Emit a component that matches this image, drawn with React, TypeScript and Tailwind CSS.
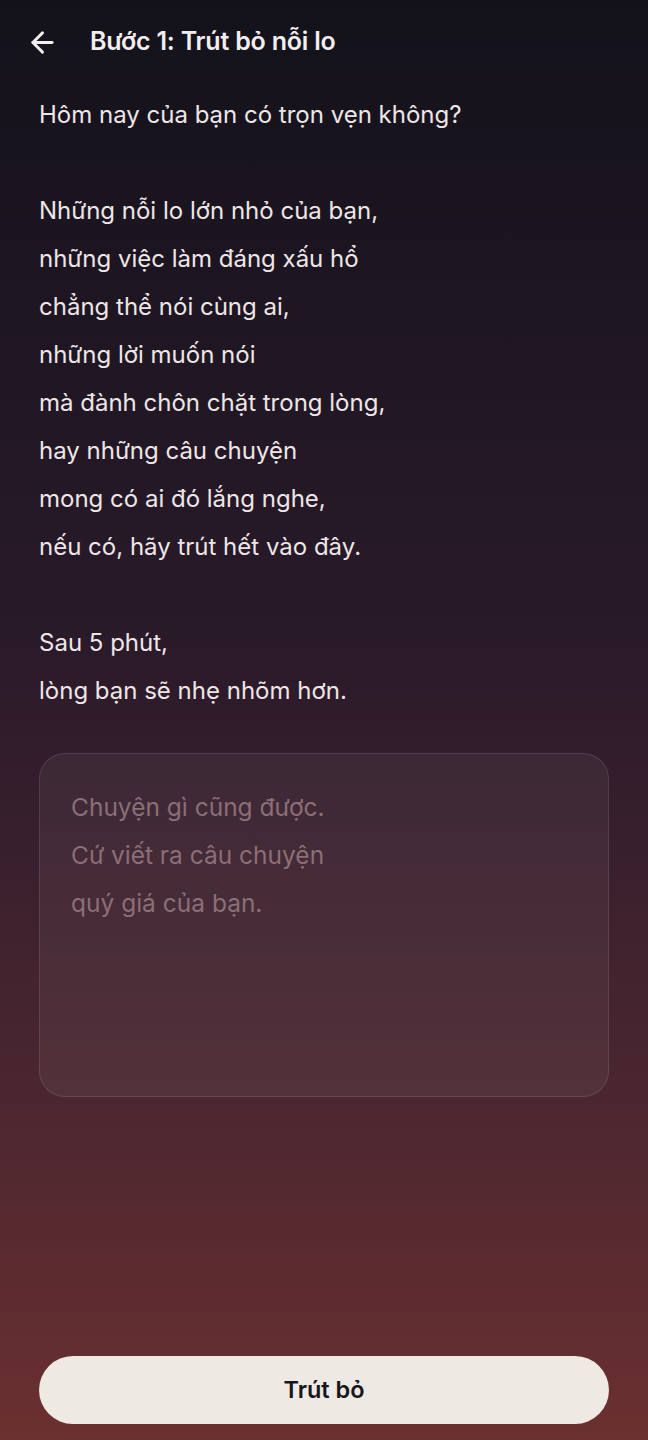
import { ArrowLeft } from "lucide-react";

const intro = [
  "Hôm nay của bạn có trọn vẹn không?",
  "",
  "Những nỗi lo lớn nhỏ của bạn,",
  "những việc làm đáng xấu hổ",
  "chẳng thể nói cùng ai,",
  "những lời muốn nói",
  "mà đành chôn chặt trong lòng,",
  "hay những câu chuyện",
  "mong có ai đó lắng nghe,",
  "nếu có, hãy trút hết vào đây.",
  "",
  "Sau 5 phút,",
  "lòng bạn sẽ nhẹ nhõm hơn.",
];

export default function App() {
  return (
    <div
      className="flex min-h-[1440px] w-full flex-col bg-[linear-gradient(180deg,#13121b_0%,#2a1a2a_45%,#4a2630_75%,#6b3030_100%)] text-[#eee6e6]"
      style={{ fontFamily: "Inter, 'Noto Sans', sans-serif" }}
    >
      {/* header */}
      <header className="flex h-[84px] items-center">
        <button className="ml-[25px] flex h-[34px] w-[34px] items-center justify-center text-[#f3eeee]">
          <ArrowLeft size={33} strokeWidth={2.1} />
        </button>
        <h1 className="ml-[31px] text-[25px] font-semibold tracking-[-0.2px] text-[#f3eeee]">
          Bước 1: Trút bỏ nỗi lo
        </h1>
      </header>

      <main className="flex flex-1 flex-col px-[39px] pt-[7px]">
        <div className="text-[24px] leading-[48px]">
          {intro.map((line, i) => (
            <p key={i} className="h-[48px]">
              {line}
            </p>
          ))}
        </div>

        <textarea
          className="mt-[38px] h-[344px] w-full resize-none rounded-[26px] border border-white/10 bg-white/[0.05] px-[31px] pt-[29px] text-[24.5px] leading-[48px] text-[#eee6e6] outline-none placeholder:text-[#8c6e77]"
          placeholder={"Chuyện gì cũng được.\nCứ viết ra câu chuyện\nquý giá của bạn."}
        />

        <div className="flex-1" />

        <button className="mb-[16px] h-[68px] w-full rounded-full bg-[#efe9e3] text-[23.5px] font-semibold text-[#17161d]">
          Trút bỏ
        </button>
      </main>
    </div>
  );
}
